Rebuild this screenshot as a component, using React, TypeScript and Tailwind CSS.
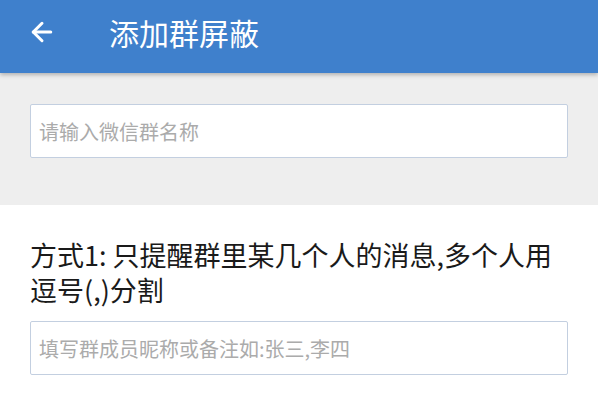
import { ArrowLeft } from 'lucide-react'

const font = { fontFamily: '"Noto Sans CJK SC", sans-serif' }

export default function App() {
  return (
    <div className="w-[598px] h-[398px] overflow-hidden bg-white" style={font}>
      <header className="relative z-10 h-[73px] pb-[10px] bg-[#3f80cc] flex items-center shadow-[0_2px_4px_rgba(0,0,0,0.25)]">
        <ArrowLeft className="ml-[27px] text-white" size={30} strokeWidth={2.4} />
        <h1 className="ml-[52px] text-[30px] text-white leading-none">添加群屏蔽</h1>
      </header>

      <section className="bg-[#eeeeee] h-[132px] pt-[31px] px-[30px]">
        <input
          className="w-full h-[54px] bg-white border border-[#c3cfe0] rounded-[2px] px-[8px] text-[20px] placeholder:text-[#ababab] outline-none"
          placeholder="请输入微信群名称"
        />
      </section>

      <section className="px-[30px] pt-[32px]">
        <p className="text-[27px] leading-[35px] text-[#1a1a1a]">
          方式1: 只提醒群里某几个人的消息,多个人用逗号(,)分割
        </p>
        <input
          className="mt-[14px] w-full h-[54px] bg-white border border-[#c3cfe0] rounded-[2px] px-[8px] text-[20px] placeholder:text-[#ababab] outline-none"
          placeholder="填写群成员昵称或备注如:张三,李四"
        />
      </section>
    </div>
  )
}
